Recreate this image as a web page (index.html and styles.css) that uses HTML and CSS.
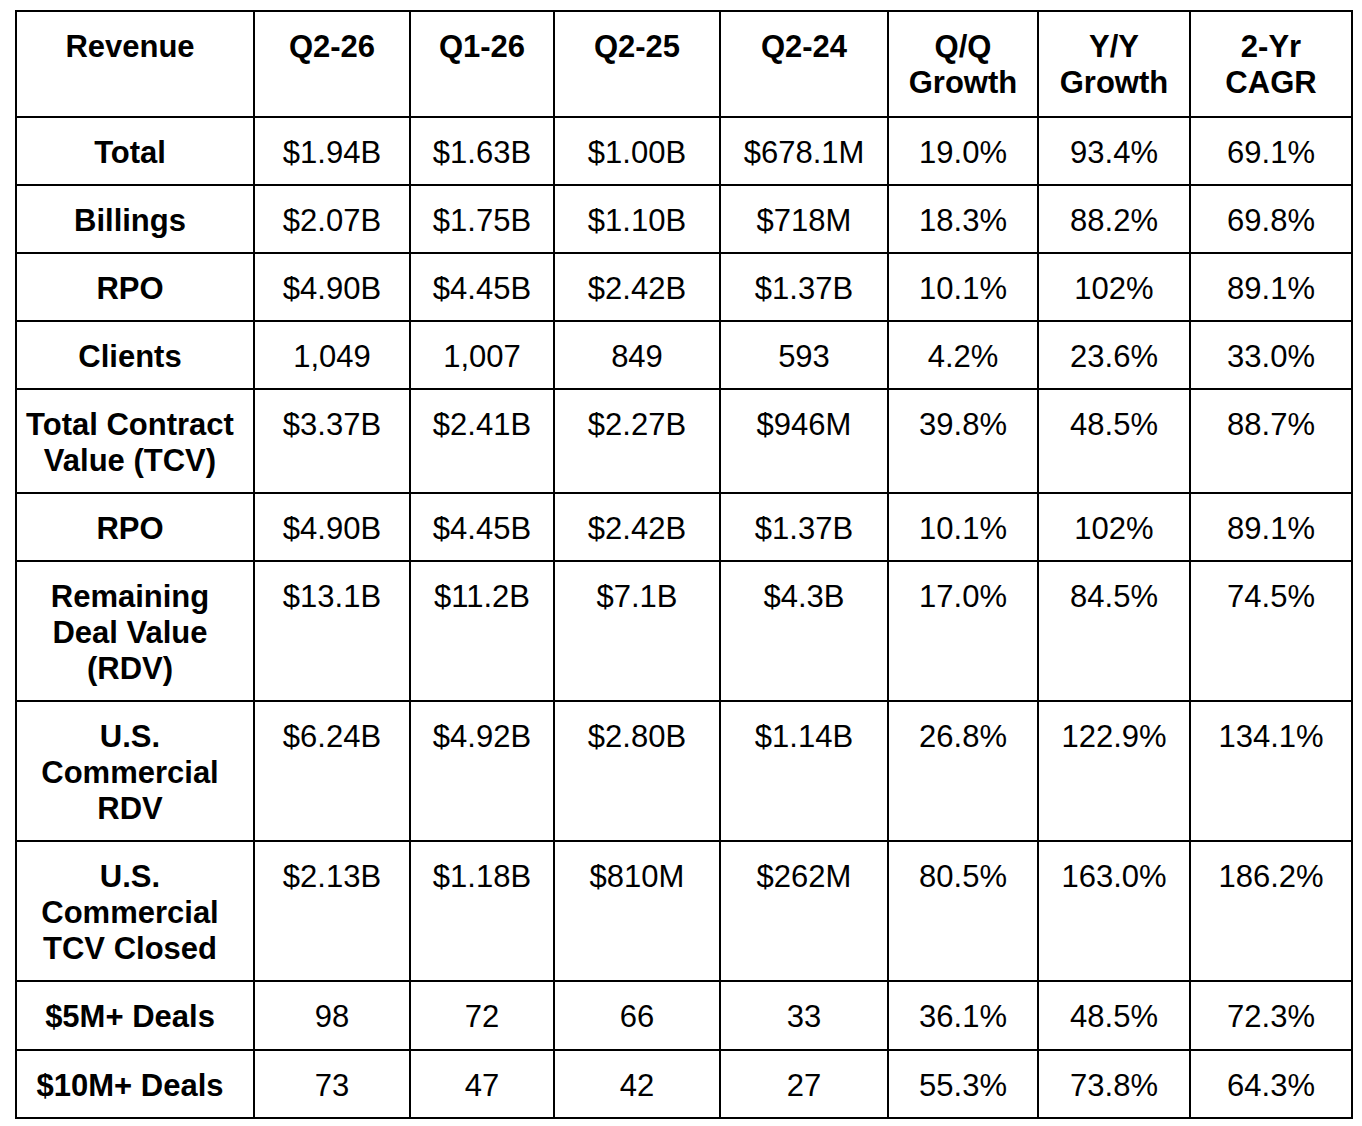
FILE: index.html
```html
<!DOCTYPE html>
<html>
<head>
<meta charset="utf-8">
<link rel="stylesheet" href="styles.css">
</head>
<body>
<table class="metrics">
  <colgroup>
    <col class="c-label">
    <col class="c-q226">
    <col class="c-q126">
    <col class="c-q225">
    <col class="c-q224">
    <col class="c-qq">
    <col class="c-yy">
    <col class="c-cagr">
  </colgroup>
  <thead>
    <tr class="head">
      <th class="label">Revenue</th>
      <th>Q2-26</th>
      <th>Q1-26</th>
      <th>Q2-25</th>
      <th>Q2-24</th>
      <th>Q/Q<br>Growth</th>
      <th>Y/Y<br>Growth</th>
      <th>2-Yr<br>CAGR</th>
    </tr>
  </thead>
  <tbody>
    <tr><th class="label">Total</th><td>$1.94B</td><td>$1.63B</td><td>$1.00B</td><td>$678.1M</td><td>19.0%</td><td>93.4%</td><td>69.1%</td></tr>
    <tr><th class="label">Billings</th><td>$2.07B</td><td>$1.75B</td><td>$1.10B</td><td>$718M</td><td>18.3%</td><td>88.2%</td><td>69.8%</td></tr>
    <tr><th class="label">RPO</th><td>$4.90B</td><td>$4.45B</td><td>$2.42B</td><td>$1.37B</td><td>10.1%</td><td>102%</td><td>89.1%</td></tr>
    <tr><th class="label">Clients</th><td>1,049</td><td>1,007</td><td>849</td><td>593</td><td>4.2%</td><td>23.6%</td><td>33.0%</td></tr>
    <tr><th class="label">Total Contract<br>Value (TCV)</th><td>$3.37B</td><td>$2.41B</td><td>$2.27B</td><td>$946M</td><td>39.8%</td><td>48.5%</td><td>88.7%</td></tr>
    <tr><th class="label">RPO</th><td>$4.90B</td><td>$4.45B</td><td>$2.42B</td><td>$1.37B</td><td>10.1%</td><td>102%</td><td>89.1%</td></tr>
    <tr><th class="label">Remaining<br>Deal Value<br>(RDV)</th><td>$13.1B</td><td>$11.2B</td><td>$7.1B</td><td>$4.3B</td><td>17.0%</td><td>84.5%</td><td>74.5%</td></tr>
    <tr><th class="label">U.S.<br>Commercial<br>RDV</th><td>$6.24B</td><td>$4.92B</td><td>$2.80B</td><td>$1.14B</td><td>26.8%</td><td>122.9%</td><td>134.1%</td></tr>
    <tr><th class="label">U.S.<br>Commercial<br>TCV Closed</th><td>$2.13B</td><td>$1.18B</td><td>$810M</td><td>$262M</td><td>80.5%</td><td>163.0%</td><td>186.2%</td></tr>
    <tr class="tall"><th class="label">$5M+ Deals</th><td>98</td><td>72</td><td>66</td><td>33</td><td>36.1%</td><td>48.5%</td><td>72.3%</td></tr>
    <tr><th class="label">$10M+ Deals</th><td>73</td><td>47</td><td>42</td><td>27</td><td>55.3%</td><td>73.8%</td><td>64.3%</td></tr>
  </tbody>
</table>
</body>
</html>
```

FILE: styles.css
```css
html, body {
  margin: 0;
  padding: 0;
  background: #ffffff;
}

body {
  padding: 10px 0 0 15px;
  font-family: "Liberation Sans", Arial, Helvetica, sans-serif;
  color: #000000;
}

.metrics {
  border-collapse: collapse;
  table-layout: fixed;
  width: 1338px;
  font-size: 31px;
  line-height: 36px;
}

.c-label { width: 238px; }
.c-q226 { width: 156px; }
.c-q126 { width: 144px; }
.c-q225 { width: 166px; }
.c-q224 { width: 168px; }
.c-qq { width: 150px; }
.c-yy { width: 152px; }
.c-cagr { width: 162px; }

.metrics th,
.metrics td {
  border: 2px solid #000000;
  padding: 17px 2px 13px;
  text-align: center;
  vertical-align: top;
  white-space: nowrap;
}

.metrics th {
  font-weight: bold;
}

.metrics td {
  font-weight: normal;
}

.metrics .label {
  padding-left: 0;
  padding-right: 10px;
}

.head th {
  padding-top: 17px;
  padding-bottom: 15px;
}

.tall th,
.tall td {
  padding-bottom: 14px;
}
```
